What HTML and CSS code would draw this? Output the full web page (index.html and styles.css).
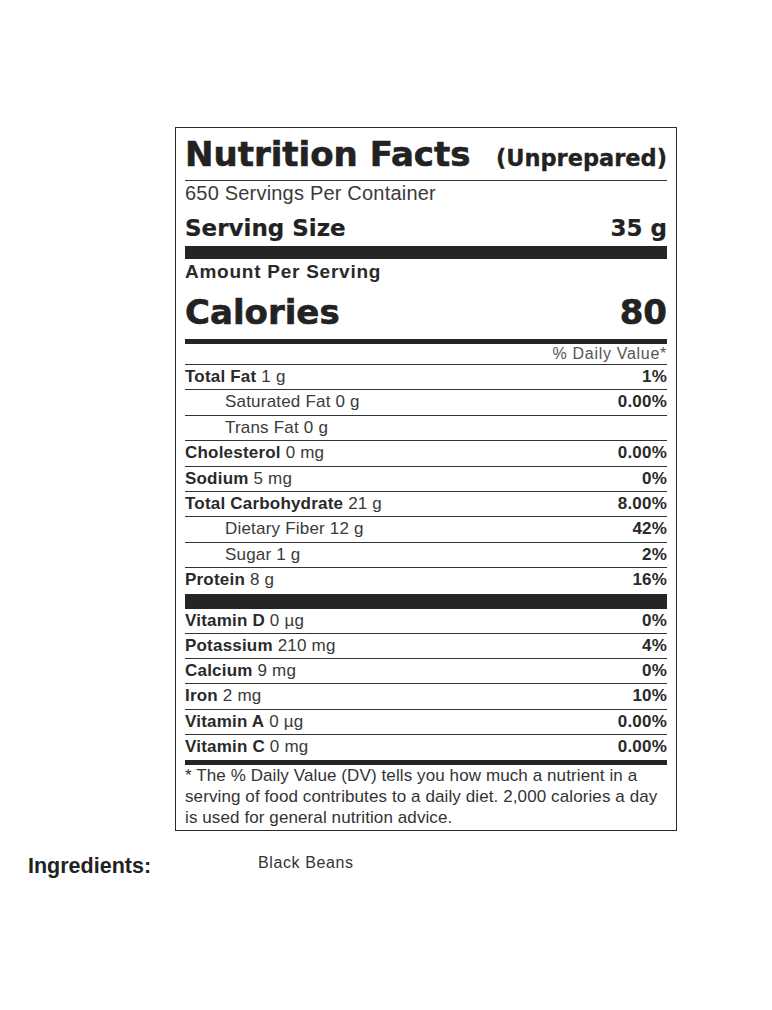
FILE: index.html
```html
<!DOCTYPE html>
<html lang="en">
<head>
<meta charset="utf-8">
<title>Nutrition Facts</title>
<link rel="stylesheet" href="styles.css">
</head>
<body>
<div class="page">
  <div class="label">
    <div class="title-row">
      <span class="title">Nutrition Facts</span>
      <span class="subtitle">(Unprepared)</span>
    </div>
    <div class="servings">650 Servings Per Container</div>
    <div class="serving-size"><span>Serving Size</span><span>35 g</span></div>
    <div class="bar-thick"></div>
    <div class="amount">Amount Per Serving</div>
    <div class="calories"><span>Calories</span><span>80</span></div>
    <div class="bar-med"></div>
    <div class="dv">% Daily Value*</div>

    <div class="row"><span><b>Total Fat</b> 1 g</span><b>1%</b></div>
    <div class="row sub"><span>Saturated Fat 0 g</span><b>0.00%</b></div>
    <div class="row sub"><span>Trans Fat 0 g</span><b></b></div>
    <div class="row"><span><b>Cholesterol</b> 0 mg</span><b>0.00%</b></div>
    <div class="row"><span><b>Sodium</b> 5 mg</span><b>0%</b></div>
    <div class="row"><span><b>Total Carbohydrate</b> 21 g</span><b>8.00%</b></div>
    <div class="row sub"><span>Dietary Fiber 12 g</span><b>42%</b></div>
    <div class="row sub"><span>Sugar 1 g</span><b>2%</b></div>
    <div class="row last"><span><b>Protein</b> 8 g</span><b>16%</b></div>
    <div class="bar-thick bar-protein"></div>

    <div class="row vit"><span><b>Vitamin D</b> 0 µg</span><b>0%</b></div>
    <div class="row vit"><span><b>Potassium</b> 210 mg</span><b>4%</b></div>
    <div class="row vit"><span><b>Calcium</b> 9 mg</span><b>0%</b></div>
    <div class="row vit"><span><b>Iron</b> 2 mg</span><b>10%</b></div>
    <div class="row vit"><span><b>Vitamin A</b> 0 µg</span><b>0.00%</b></div>
    <div class="row vit last"><span><b>Vitamin C</b> 0 mg</span><b>0.00%</b></div>
    <div class="bar-med"></div>

    <p class="footnote">* The % Daily Value (DV) tells you how much a nutrient in a serving of food contributes to a daily diet. 2,000 calories a day is used for general nutrition advice.</p>
  </div>

  <div class="ingredients">
    <span class="ing-label">Ingredients:</span>
    <span class="ing-value">Black Beans</span>
  </div>
</div>
</body>
</html>
```

FILE: styles.css
```css
html, body {
  margin: 0;
  padding: 0;
  background: #ffffff;
}

.page {
  padding-top: 127px;
  font-family: "Liberation Sans", Arial, sans-serif;
  color: #2a2a2a;
}

.label {
  margin-left: 175px;
  width: 482px;
  padding: 0 9px;
  border: 1px solid #2b2b2b;
}

.title-row {
  display: flex;
  justify-content: space-between;
  align-items: baseline;
  height: 43px;
  padding-top: 9px;
  border-bottom: 1px solid #333;
  font-family: "DejaVu Sans", sans-serif;
  font-weight: bold;
  color: #222;
}

.title {
  font-size: 34px;
  line-height: 34px;
  -webkit-text-stroke: 0.6px #222;
}

.subtitle {
  font-size: 22.5px;
  line-height: 34px;
  -webkit-text-stroke: 0.3px #222;
}

.servings {
  height: 24px;
  font-size: 20px;
  line-height: 24px;
  letter-spacing: 0.2px;
  color: #3a3a3a;
}

.serving-size {
  display: flex;
  justify-content: space-between;
  height: 35px;
  padding-top: 6px;
  font-family: "DejaVu Sans", sans-serif;
  font-weight: bold;
  font-size: 23px;
  line-height: 35px;
  color: #222;
  -webkit-text-stroke: 0.2px #222;
}

.bar-thick {
  height: 13px;
  background: #252525;
}

.bar-protein {
  height: 15px;
}

.bar-med {
  height: 5px;
  background: #252525;
}

.amount {
  height: 25px;
  padding-bottom: 2px;
  font-weight: bold;
  font-size: 19px;
  line-height: 25px;
  letter-spacing: 0.75px;
  color: #2a2a2a;
}

.calories {
  display: flex;
  justify-content: space-between;
  height: 53px;
  font-family: "DejaVu Sans", sans-serif;
  font-weight: bold;
  font-size: 34px;
  line-height: 53px;
  color: #222;
  -webkit-text-stroke: 0.6px #222;
}

.dv {
  height: 20px;
  border-bottom: 1px solid #333;
  text-align: right;
  font-size: 16px;
  line-height: 20px;
  letter-spacing: 0.7px;
  color: #555;
}

.row {
  display: flex;
  justify-content: space-between;
  height: 24.4px;
  border-bottom: 1px solid #333;
  font-size: 17px;
  line-height: 24px;
  letter-spacing: 0.2px;
  color: #3a3a3a;
}

.row.vit {
  height: 24.25px;
}

.row.last {
  border-bottom: none;
  height: 25.4px;
}

.row.vit.last {
  height: 25.25px;
}

.row b {
  color: #2a2a2a;
}

.row.sub {
  padding-left: 40px;
}

.footnote {
  margin: 0;
  padding-bottom: 2px;
  font-size: 17px;
  line-height: 21px;
  letter-spacing: 0.1px;
  color: #333;
}

.ingredients {
  display: flex;
  align-items: flex-start;
  margin: 22px 0 0 28px;
}

.ing-label {
  width: 230px;
  font-weight: bold;
  font-size: 21.5px;
  line-height: 26px;
  color: #222;
}

.ing-value {
  font-size: 16px;
  line-height: 20px;
  letter-spacing: 0.6px;
  color: #333;
}
```
